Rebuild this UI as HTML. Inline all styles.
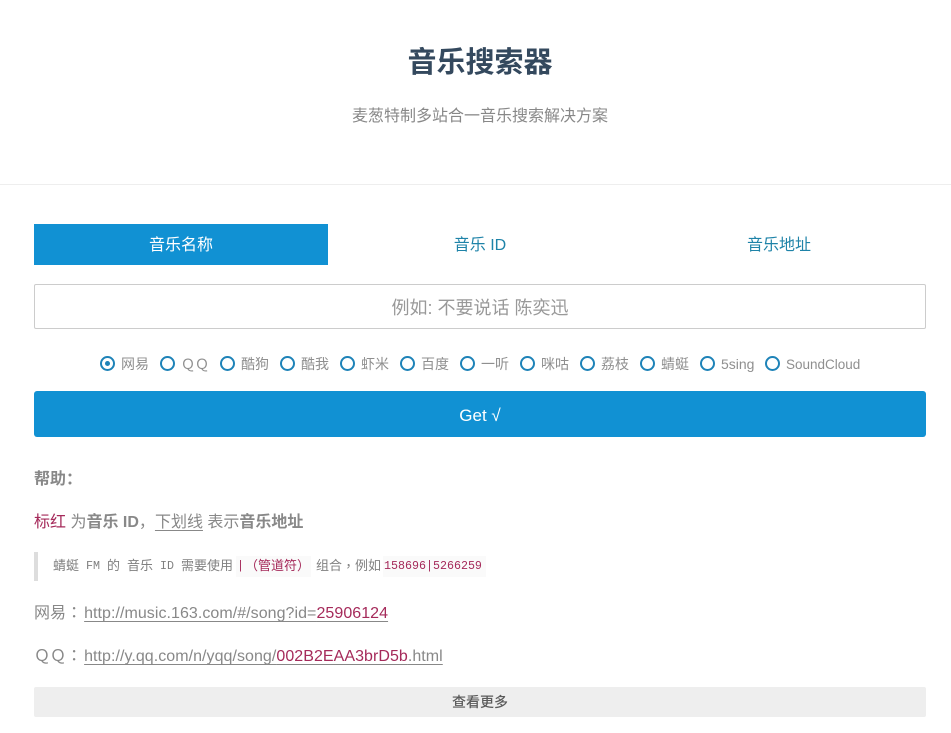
<!DOCTYPE html>
<html lang="zh-CN">
<head>
<meta charset="utf-8">
<title>音乐搜索器</title>
<style>
html,body{margin:0;padding:0;background:#fff;}
body{position:relative;width:951px;height:733px;overflow:hidden;font-family:"Liberation Sans","Noto Sans CJK SC",sans-serif;color:#888;}
.a{position:absolute;white-space:nowrap;line-height:1;}
.c{text-align:center;}
b{font-weight:700;}
.p{font-family:"Noto Sans CJK TC",sans-serif;}
.radio{position:absolute;top:356px;width:15px;height:15px;box-sizing:border-box;border:2.5px solid #1e83b8;border-radius:50%;}
.radio i{position:absolute;left:2.5px;top:2.5px;width:5px;height:5px;border-radius:50%;background:#1e83b8;}
.lb{position:absolute;top:356px;font-size:14px;line-height:16px;color:#8f8f8f;white-space:nowrap;}
u{text-underline-offset:3px;text-decoration-thickness:1px;}
.cd{position:absolute;top:558px;height:16px;line-height:16px;font-size:13px;color:#808080;white-space:nowrap;}
.m{font-family:"Liberation Mono",monospace;font-size:11.67px;}
.bg{position:absolute;top:556px;height:21px;background:#fafafa;}
.r{color:#a52a5a;}
</style>
</head>
<body>
<div class="a c" style="left:0;width:960px;top:46px;font-size:29px;line-height:34px;font-weight:700;color:#34495e;">音乐搜索器</div>
<div class="a c" style="left:0;width:960px;top:108px;font-size:16px;line-height:18px;color:#888;">麦葱特制多站合一音乐搜索解决方案</div>
<div style="position:absolute;left:0;top:184px;width:951px;height:1px;background:#eee;"></div>

<div class="a c" style="left:34px;top:224px;width:294px;height:41px;line-height:43px;background:#1191d3;color:#fff;font-size:16px;">音乐名称</div>
<div class="a c" style="left:333px;top:224px;width:294px;height:41px;line-height:44px;color:#1e83a8;font-size:16px;">音乐 ID</div>
<div class="a c" style="left:632px;top:224px;width:294px;height:41px;line-height:44px;color:#1e83a8;font-size:16px;">音乐地址</div>

<div class="a c" style="left:34px;top:284px;width:892px;height:45px;box-sizing:border-box;border:1px solid #ccc;border-radius:2px;line-height:46px;font-size:18px;color:#999;">例如: 不要说话 陈奕迅</div>

<div class="radio" style="left:100px;"><i></i></div><span class="lb" style="left:121px;">网易</span>
<div class="radio" style="left:160px;"></div><span class="lb" style="left:181px;">ＱＱ</span>
<div class="radio" style="left:220px;"></div><span class="lb" style="left:241px;">酷狗</span>
<div class="radio" style="left:280px;"></div><span class="lb" style="left:301px;">酷我</span>
<div class="radio" style="left:340px;"></div><span class="lb" style="left:361px;">虾米</span>
<div class="radio" style="left:400px;"></div><span class="lb" style="left:421px;">百度</span>
<div class="radio" style="left:460px;"></div><span class="lb" style="left:481px;">一听</span>
<div class="radio" style="left:520px;"></div><span class="lb" style="left:541px;">咪咕</span>
<div class="radio" style="left:580px;"></div><span class="lb" style="left:601px;">荔枝</span>
<div class="radio" style="left:640px;"></div><span class="lb" style="left:661px;">蜻蜓</span>
<div class="radio" style="left:700px;"></div><span class="lb" style="left:721px;">5sing</span>
<div class="radio" style="left:765px;"></div><span class="lb" style="left:786px;top:357px;font-size:13.5px;">SoundCloud</span>

<div class="a c" style="left:34px;top:391px;width:892px;height:46px;line-height:49px;background:#1191d3;border-radius:3px;color:#fff;font-size:17px;">Get √</div>

<div class="a" style="left:34px;top:468px;font-size:16px;line-height:18px;font-weight:700;">帮助<span class="p">：</span></div>
<div class="a" style="left:34px;top:511px;font-size:16px;line-height:18px;"><span class="r">标红</span> 为<b>音乐 ID</b><span class="p">，</span><u>下划线</u> 表示<b>音乐地址</b></div>

<div style="position:absolute;left:34px;top:552px;width:4px;height:29px;background:#ddd;"></div>
<div class="bg" style="left:236px;width:75px;"></div>
<div class="bg" style="left:383px;width:103px;"></div>
<span class="cd" style="left:53px;">蜻蜓</span>
<span class="cd m" style="left:86px;">FM</span>
<span class="cd" style="left:107px;">的</span>
<span class="cd" style="left:127px;">音乐</span>
<span class="cd m" style="left:160px;">ID</span>
<span class="cd" style="left:181px;">需要使用</span>
<span class="cd m r" style="left:237px;">|</span>
<span class="cd r" style="left:245px;">（管道符）</span>
<span class="cd" style="left:316px;">组合</span>
<span class="cd p" style="left:342px;">，</span>
<span class="cd" style="left:355px;">例如</span>
<span class="cd m r" style="left:384px;">158696|5266259</span>

<div class="a" style="left:34px;top:602px;font-size:16px;line-height:18px;letter-spacing:.05px;">网易<span class="p" style="display:inline-block;width:18px;">：</span><u>http://music.163.com/#/song?id=<span class="r">25906124</span></u></div>
<div class="a" style="left:34px;top:645px;font-size:16px;line-height:18px;letter-spacing:.05px;">ＱＱ<span class="p" style="display:inline-block;width:18px;">：</span><u>http://y.qq.com/n/yqq/song/<span class="r">002B2EAA3brD5b</span>.html</u></div>

<div class="a c" style="left:34px;top:687px;width:892px;height:30px;line-height:31px;background:#eee;border-radius:2px;font-size:14px;color:#5a5a5a;font-weight:500;">查看更多</div>
</body>
</html>
